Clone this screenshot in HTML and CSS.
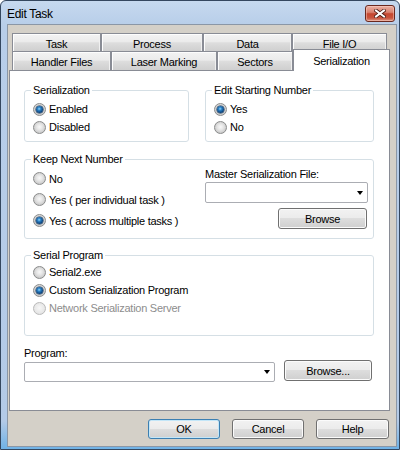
FILE: index.html
```html
<!DOCTYPE html>
<html>
<head>
<meta charset="utf-8">
<title>Edit Task</title>
<link rel="stylesheet" href="styles.css">
</head>
<body>
<div class="window">
  <div class="titlebar">
    <span class="title">Edit Task</span>
    <span class="close">
      <svg width="12" height="9" viewBox="0 0 12 9">
        <path d="M2 1.5 L10 7.5 M10 1.5 L2 7.5" stroke="#4a1a12" stroke-width="3.6" stroke-linecap="square" fill="none"/>
        <path d="M2 1.5 L10 7.5 M10 1.5 L2 7.5" stroke="#ffffff" stroke-width="2" stroke-linecap="square" fill="none"/>
      </svg>
    </span>
  </div>
  <div class="client">
    <div class="tabs">
      <div class="tabrow row1">
        <div class="tab t-task">Task</div>
        <div class="tab t-process">Process</div>
        <div class="tab t-data">Data</div>
        <div class="tab t-file">File I/O</div>
      </div>
      <div class="tabrow row2">
        <div class="tab t-handler">Handler Files</div>
        <div class="tab t-laser">Laser Marking</div>
        <div class="tab t-sectors">Sectors</div>
        <div class="tab t-serial sel">Serialization</div>
      </div>
    </div>
    <div class="panel">
      <div class="grp-row">
        <fieldset class="grp g-ser">
          <legend>Serialization</legend>
          <div class="opt"><span class="radio on"></span>Enabled</div>
          <div class="opt"><span class="radio"></span>Disabled</div>
        </fieldset>
        <fieldset class="grp g-esn">
          <legend>Edit Starting Number</legend>
          <div class="opt"><span class="radio on"></span>Yes</div>
          <div class="opt"><span class="radio"></span>No</div>
        </fieldset>
      </div>
      <fieldset class="grp g-keep">
        <legend>Keep Next Number</legend>
        <div class="keep-grid">
          <div class="col-l">
            <div class="opt opt21"><span class="radio"></span>No</div>
            <div class="opt opt21"><span class="radio"></span>Yes ( per individual task )</div>
            <div class="opt opt21"><span class="radio on"></span>Yes ( across multiple tasks )</div>
          </div>
          <div class="col-r">
            <div class="field-label">Master Serialization File:</div>
            <div class="combo c-master"><span class="arrow"></span></div>
            <div class="btn browse1">Browse</div>
          </div>
        </div>
      </fieldset>
      <fieldset class="grp g-prog">
        <legend>Serial Program</legend>
        <div class="opt"><span class="radio"></span>Serial2.exe</div>
        <div class="opt"><span class="radio on"></span>Custom Serialization Program</div>
        <div class="opt dis-text"><span class="radio dis"></span>Network Serialization Server</div>
      </fieldset>
      <div class="prog-label">Program:</div>
      <div class="prog-row">
        <div class="combo c-prog"><span class="arrow"></span></div>
        <div class="btn browse2">Browse...</div>
      </div>
    </div>
    <div class="actions">
      <div class="btn act ok">OK</div>
      <div class="btn act">Cancel</div>
      <div class="btn act help">Help</div>
    </div>
  </div>
</div>
</body>
</html>
```
FILE: styles.css
```css
body {
  margin: 0;
  font-family: "Liberation Sans", Arial, sans-serif;
  font-size: 11px;
  letter-spacing: -0.25px;
  color: #000;
}

.window {
  width: 400px;
  height: 450px;
  box-sizing: border-box;
  border: 1px solid #34475f;
  border-radius: 6px 6px 0 0;
  background: linear-gradient(#c6d9ef, #b8cee9 24px, #b3cae7 420px, #6fb2e6);
  padding: 0 2px 2px 6px;
  display: flex;
  flex-direction: column;
  overflow: hidden;
}

.titlebar {
  height: 23px;
  display: flex;
  justify-content: space-between;
  align-items: flex-start;
  flex: none;
}

.title {
  font-size: 12px;
  line-height: 15px;
  padding-top: 6px;
  letter-spacing: -0.3px;
}

.close {
  width: 30px;
  height: 17px;
  margin-top: 4px;
  margin-right: 2px;
  box-sizing: border-box;
  border: 1px solid #6a281e;
  border-radius: 3px;
  background: linear-gradient(#eab0a2, #d98270 42%, #c4462f 52%, #c9553e 80%, #de9a88);
  box-shadow: inset 0 0 0 1px rgba(255, 214, 204, 0.45);
  display: flex;
  align-items: center;
  justify-content: center;
}

.client {
  height: 423px;
  box-sizing: border-box;
  border: 1px solid #8b97a6;
  background: #d4d0c8;
  flex: none;
}

.tabs {
  padding: 8px 0 0 4px;
}

.tabrow {
  display: flex;
}

.row1 { height: 18px; }
.row2 { height: 19px; }

.tab {
  box-sizing: border-box;
  height: 100%;
  border: 1px solid #898c95;
  border-bottom: 0;
  background: linear-gradient(#f3f3f3, #ebebeb 45%, #dddddd 52%, #cfcfcf);
  box-shadow: inset 1px 1px 0 #fdfdfd, inset -1px 0 0 #f0f0f0;
  display: flex;
  align-items: center;
  justify-content: center;
  padding-top: 2px;
  flex: none;
}

.t-task { width: 89px; }
.t-process { width: 102px; }
.t-data { width: 89px; }
.t-file { width: 95px; }
.t-handler { width: 99px; }
.t-laser { width: 106px; }
.t-sectors { width: 76px; }
.t-serial { width: 97px; }

.tab.sel {
  height: 22px;
  margin-top: -2px;
  background: #fff;
  box-shadow: none;
  padding-top: 0;
  position: relative;
  z-index: 1;
}

.panel {
  margin-left: 1px;
  width: 381px;
  height: 341px;
  box-sizing: border-box;
  border: 1px solid #898c95;
  background: #fff;
  padding: 12px 15px 0 14px;
}

.grp {
  margin: 0;
  box-sizing: border-box;
  padding: 3px 6px 5px 8px;
  border: 1px solid #d5dfe5;
  border-radius: 3px;
  min-width: 0;
}

legend {
  padding: 0 2px;
  margin-left: -2px;
  line-height: 14px;
}

.grp-row {
  display: flex;
  gap: 16px;
}

.g-ser { width: 165px; }
.g-esn { width: 169px; }

.opt {
  display: flex;
  align-items: center;
  height: 18px;
  white-space: nowrap;
}

.opt21 { height: 21px; }

.radio {
  width: 13px;
  height: 13px;
  box-sizing: border-box;
  border-radius: 50%;
  border: 1px solid #8a8b8b;
  background: radial-gradient(circle at 50% 45%, #f8f8f8 0, #e6e6e6 35%, #c9c9c9 75%, #b4b4b4 100%);
  display: flex;
  align-items: center;
  justify-content: center;
  margin-right: 3px;
  flex: none;
}

.radio.on::after {
  content: "";
  width: 7px;
  height: 7px;
  border-radius: 50%;
  background: radial-gradient(circle at 45% 40%, #8fd6ff 0, #2a7fc2 30%, #0c4580 65%, #082d55 100%);
  box-shadow: 0 0 0 0.5px #0f2f50;
}

.radio.dis {
  border-color: #b9b9b9;
  background: radial-gradient(circle at 50% 45%, #f7f7f7, #e2e2e2 80%);
}

.dis-text { color: #8d8d8d; }

.g-keep {
  margin-top: 10px;
  padding: 2px 5px 7px 8px;
}

.keep-grid {
  display: grid;
  grid-template-columns: 172px 1fr;
}

.col-r {
  display: flex;
  flex-direction: column;
}

.field-label {
  line-height: 12px;
}

.combo {
  box-sizing: border-box;
  border: 1px solid #abadb3;
  border-radius: 2px;
  background: #fff;
  display: flex;
  justify-content: flex-end;
  align-items: center;
  padding-right: 4px;
}

.c-master {
  width: 163px;
  height: 21px;
  margin-top: 2px;
}

.arrow {
  width: 0;
  height: 0;
  border-left: 3.5px solid transparent;
  border-right: 3.5px solid transparent;
  border-top: 4px solid #000;
}

.btn {
  box-sizing: border-box;
  border: 1px solid #707070;
  border-radius: 3px;
  background: linear-gradient(#f2f2f2, #ebebeb 50%, #dddddd 50%, #cfcfcf);
  box-shadow: inset 0 0 0 1px #fbfbfb;
  display: flex;
  align-items: center;
  justify-content: center;
}

.browse1 {
  width: 89px;
  height: 21px;
  margin-top: 5px;
  align-self: flex-end;
  margin-right: 1px;
}

.g-prog {
  margin-top: 9px;
  padding: 1px 6px 18px 8px;
}

.prog-label {
  margin-top: 10px;
  line-height: 14px;
}

.prog-row {
  display: flex;
  gap: 9px;
  align-items: flex-start;
}

.c-prog {
  width: 251px;
  height: 20px;
  margin-top: 2px;
}

.browse2 {
  width: 88px;
  height: 21px;
}

.actions {
  display: flex;
  justify-content: flex-end;
  gap: 12px;
  padding-right: 7px;
  margin-top: 8px;
}

.act {
  width: 72px;
  height: 20px;
}

.help { width: 73px; }

.ok {
  border-color: #3c7fb1;
  box-shadow: inset 0 0 0 1px #c3e6f8;
}
```
